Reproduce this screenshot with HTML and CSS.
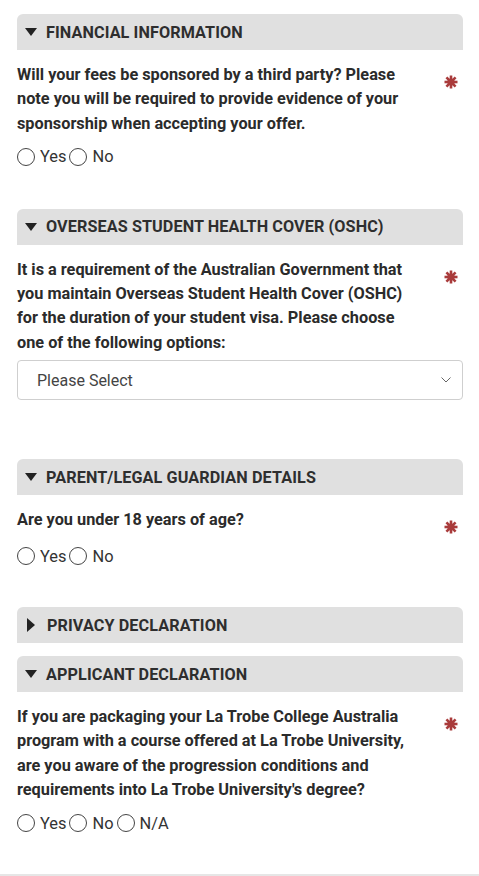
FILE: index.html
```html
<!DOCTYPE html>
<html lang="en">
<head>
<meta charset="utf-8">
<title>Application form</title>
<link rel="stylesheet" href="styles.css">
</head>
<body>
<div class="page">
  <section class="section first">
    <div class="hdr"><span class="tri-down"></span><span>FINANCIAL INFORMATION</span></div>
    <div class="qrow">
      <div class="qtext">Will your fees be sponsored by a third party? Please note you will be required to provide evidence of your sponsorship when accepting your offer.</div>
      <div class="req"><svg width="14" height="14" viewBox="0 0 14 14"><g stroke="#a93b3b" stroke-width="2.6" stroke-linecap="butt"><line x1="7" y1="0.5" x2="7" y2="13.5"/><line x1="0.5" y1="7" x2="13.5" y2="7"/><line x1="2.4" y1="2.4" x2="11.6" y2="11.6"/><line x1="11.6" y1="2.4" x2="2.4" y2="11.6"/></g><circle cx="7" cy="7" r="3.6" fill="#a93b3b"/></svg></div>
    </div>
    <div class="radios">
      <label class="opt"><span class="circle"></span>Yes</label>
      <label class="opt"><span class="circle"></span>No</label>
    </div>
  </section>

  <section class="section with-select">
    <div class="hdr"><span class="tri-down"></span><span>OVERSEAS STUDENT HEALTH COVER (OSHC)</span></div>
    <div class="qrow">
      <div class="qtext">It is a requirement of the Australian Government that you maintain Overseas Student Health Cover (OSHC) for the duration of your student visa. Please choose one of the following options:</div>
      <div class="req"><svg width="14" height="14" viewBox="0 0 14 14"><g stroke="#a93b3b" stroke-width="2.6"><line x1="7" y1="0.5" x2="7" y2="13.5"/><line x1="0.5" y1="7" x2="13.5" y2="7"/><line x1="2.4" y1="2.4" x2="11.6" y2="11.6"/><line x1="11.6" y1="2.4" x2="2.4" y2="11.6"/></g><circle cx="7" cy="7" r="3.6" fill="#a93b3b"/></svg></div>
    </div>
    <div class="select">
      <span>Please Select</span>
      <svg class="chev" width="10" height="6" viewBox="0 0 10 6"><polyline points="0.5,0.5 5,5 9.5,0.5" fill="none" stroke="#666" stroke-width="1"/></svg>
    </div>
  </section>

  <section class="section">
    <div class="hdr"><span class="tri-down"></span><span>PARENT/LEGAL GUARDIAN DETAILS</span></div>
    <div class="qrow">
      <div class="qtext">Are you under 18 years of age?</div>
      <div class="req"><svg width="14" height="14" viewBox="0 0 14 14"><g stroke="#a93b3b" stroke-width="2.6"><line x1="7" y1="0.5" x2="7" y2="13.5"/><line x1="0.5" y1="7" x2="13.5" y2="7"/><line x1="2.4" y1="2.4" x2="11.6" y2="11.6"/><line x1="11.6" y1="2.4" x2="2.4" y2="11.6"/></g><circle cx="7" cy="7" r="3.6" fill="#a93b3b"/></svg></div>
    </div>
    <div class="radios">
      <label class="opt"><span class="circle"></span>Yes</label>
      <label class="opt"><span class="circle"></span>No</label>
    </div>
  </section>

  <div class="hdr collapsed"><span class="tri-right"></span><span>PRIVACY DECLARATION</span></div>

  <section class="section last">
    <div class="hdr"><span class="tri-down"></span><span>APPLICANT DECLARATION</span></div>
    <div class="qrow">
      <div class="qtext">If you are packaging your La Trobe College Australia program with a course offered at La Trobe University, are you aware of the progression conditions and requirements into La Trobe University's degree?</div>
      <div class="req"><svg width="14" height="14" viewBox="0 0 14 14"><g stroke="#a93b3b" stroke-width="2.6"><line x1="7" y1="0.5" x2="7" y2="13.5"/><line x1="0.5" y1="7" x2="13.5" y2="7"/><line x1="2.4" y1="2.4" x2="11.6" y2="11.6"/><line x1="11.6" y1="2.4" x2="2.4" y2="11.6"/></g><circle cx="7" cy="7" r="3.6" fill="#a93b3b"/></svg></div>
    </div>
    <div class="radios">
      <label class="opt"><span class="circle"></span>Yes</label>
      <label class="opt"><span class="circle"></span>No</label>
      <label class="opt"><span class="circle"></span>N/A</label>
    </div>
  </section>
</div>
<div class="footer-line"></div>
</body>
</html>
```

FILE: styles.css
```css
html, body {
  margin: 0;
  padding: 0;
  background: #ffffff;
}
body {
  font-family: Roboto, "Liberation Sans", Arial, sans-serif;
  color: #2b2b2b;
  font-size: 16px;
}
.page {
  padding: 14px 16px 0 17px;
}
.section {
  margin-bottom: 40px;
}
.section.first {
  margin-bottom: 41px;
}
.section.with-select {
  margin-bottom: 59px;
}
.section.last {
  margin-bottom: 40px;
}
.hdr {
  height: 36px;
  background: #e0e0e0;
  border-radius: 6px 6px 0 0;
  display: flex;
  align-items: center;
  padding-left: 8px;
  font-weight: 700;
  font-size: 16.2px;
  color: #2e2e2e;
  letter-spacing: 0.1px;
}
.hdr.collapsed {
  margin-bottom: 13px;
}
.tri-down {
  width: 0;
  height: 0;
  border-left: 6.5px solid transparent;
  border-right: 6.5px solid transparent;
  border-top: 8px solid #222;
  margin-right: 9px;
}
.tri-right {
  width: 0;
  height: 0;
  border-top: 7px solid transparent;
  border-bottom: 7px solid transparent;
  border-left: 8px solid #222;
  margin-left: 2px;
  margin-right: 12px;
}
.qrow {
  display: flex;
  justify-content: space-between;
  margin-top: 13px;
}
.qtext {
  width: 400px;
  font-weight: 700;
  font-size: 16.3px;
  line-height: 24.3px;
  color: #2b2b2b;
}
.req {
  width: 19px;
  padding-top: 12px;
  height: 15px;
  display: flex;
  justify-content: flex-start;
}
.radios {
  display: flex;
  margin-top: 10px;
  height: 22px;
  align-items: center;
}
.opt {
  display: flex;
  align-items: center;
  margin-right: 3px;
  color: #333;
  font-size: 16.4px;
}
.circle {
  width: 18px;
  height: 18px;
  border: 1px solid #444;
  border-radius: 50%;
  margin-right: 5px;
  box-sizing: border-box;
  background: #fff;
}
.select {
  margin-top: 5px;
  height: 40px;
  box-sizing: border-box;
  border: 1px solid #cfcfcf;
  border-radius: 4px;
  display: flex;
  align-items: center;
  justify-content: space-between;
  padding: 0 11px 0 19px;
  color: #444;
}
.chev {
  display: block;
}
.footer-line {
  height: 2px;
  background: #e6e6e6;
}
```
